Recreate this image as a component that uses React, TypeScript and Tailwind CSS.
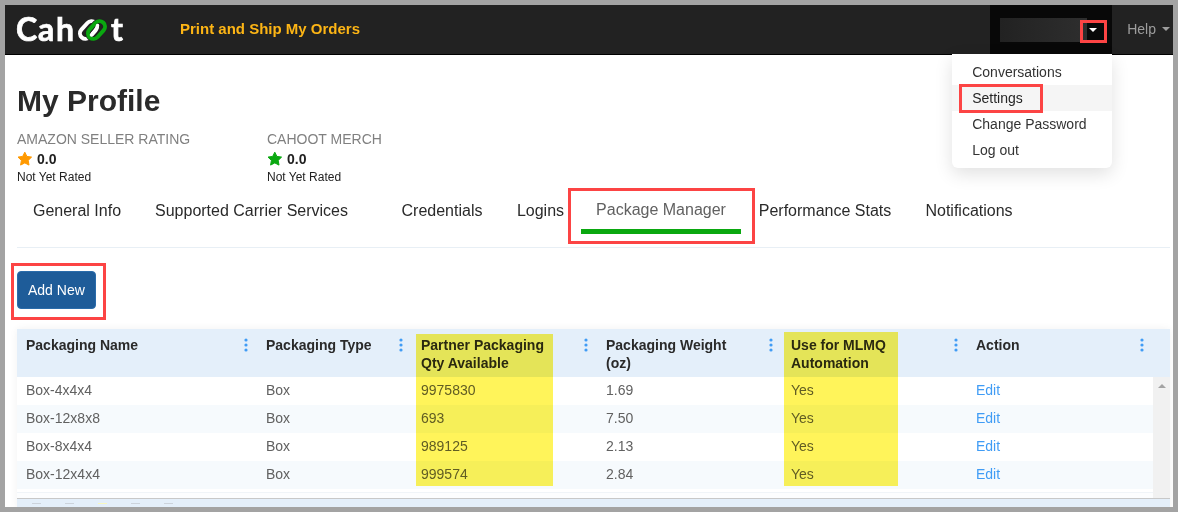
import { useState } from "react";

const MENU = ["Conversations", "Settings", "Change Password", "Log out"];

const RATINGS = [
  { title: "AMAZON SELLER RATING", score: "0.0", note: "Not Yet Rated", color: "text-[#ff9900]" },
  { title: "CAHOOT MERCH", score: "0.0", note: "Not Yet Rated", color: "text-[#0aa810]" },
];

const TABS = [
  { label: "General Info", width: "w-[120px]" },
  { label: "Supported Carrier Services", width: "w-[229px]" },
  { label: "Credentials", width: "ml-[18px] w-[116px]" },
  { label: "Logins", width: "w-[81px]" },
  { label: "Package Manager", width: "w-[160px]" },
  { label: "Performance Stats", width: "w-[168px]" },
  { label: "Notifications", width: "w-[120px]" },
];

const COLUMNS = [
  { title: "Packaging Name", width: "w-[240px]", dots: "right-[9px]" },
  { title: "Packaging Type", width: "w-[155px]", dots: "right-[9px]" },
  { title: "Partner Packaging Qty Available", width: "w-[185px]", dots: "right-[9px]" },
  { title: "Packaging Weight (oz)", width: "w-[185px]", dots: "right-[9px]" },
  { title: "Use for MLMQ Automation", width: "w-[185px]", dots: "right-[9px]" },
  { title: "Action", width: "", dots: "right-[26px]" },
];

const ROWS = [
  { name: "Box-4x4x4", type: "Box", qty: "9975830", weight: "1.69", mlmq: "Yes" },
  { name: "Box-12x8x8", type: "Box", qty: "693", weight: "7.50", mlmq: "Yes" },
  { name: "Box-8x4x4", type: "Box", qty: "989125", weight: "2.13", mlmq: "Yes" },
  { name: "Box-12x4x4", type: "Box", qty: "999574", weight: "2.84", mlmq: "Yes" },
];

function Logo() {
  return (
    <a href="#" aria-label="Cahoot" className="block">
      <svg width="116" height="48" viewBox="-4 -12 116 48" className="block">
        <g
          fill="#fff"
          stroke="#fff"
          strokeWidth="0.7"
          fontSize="32"
          fontWeight="700"
          fontFamily="Lato, sans-serif"
        >
          <text x="-1" y="24">C</text>
          <text x="21" y="24">a</text>
          <text x="39" y="24">h</text>
          <text x="94" y="24">t</text>
        </g>
        <g fill="none" strokeWidth="4">
          <rect x="66" y="3" width="11" height="20" rx="5.5" stroke="#fff" transform="rotate(42 71.5 13)" />
          <rect x="74" y="3" width="11" height="20" rx="5.5" stroke="#222" strokeWidth="5.5" transform="rotate(42 79.5 13)" />
          <rect x="74" y="3" width="11" height="20" rx="5.5" stroke="#0aa810" transform="rotate(42 79.5 13)" />
          <path d="M80.500 8.500C80.500 11 79 13 74.500 18" stroke="#fff" strokeWidth="3.5" strokeLinecap="round" />
        </g>
      </svg>
    </a>
  );
}

function Caret({ className = "" }: { className?: string }) {
  return (
    <svg width="8" height="4" viewBox="0 0 8 4" fill="currentColor" className={className}>
      <path d="M0 0h8L4 4z" />
    </svg>
  );
}

function Star({ className = "" }: { className?: string }) {
  return (
    <svg
      width="16"
      height="16"
      viewBox="0 0 16 16"
      fill="currentColor"
      stroke="currentColor"
      strokeLinejoin="round"
      className={className}
    >
      <path d="M7.8 1.2l2.1 4.2 4.700.7-3.400 3.300.8 4.700-4.200-2.200-4.200 2.200.8-4.700L1 6.100l4.700-.7z" />
    </svg>
  );
}

function Dots() {
  return (
    <svg width="4" height="14" viewBox="0 0 4 14" fill="#409cf5">
      <circle cx="2" cy="2" r="1.6" />
      <circle cx="2" cy="7" r="1.6" />
      <circle cx="2" cy="12" r="1.6" />
    </svg>
  );
}

// red outline drawn over whatever its relative parent holds
function Callout({ className }: { className: string }) {
  return <div className={`pointer-events-none absolute z-20 border-3 border-[#fc4444] ${className}`} />;
}

function TopBar() {
  const [open, setOpen] = useState(true);

  return (
    <header className="flex h-[50px] items-stretch border-b border-black bg-[#222222]">
      <div className="w-[175px] pl-2">
        <Logo />
      </div>
      <a href="#" className="self-center text-[15px] font-bold text-[#fdb515]">
        Print and Ship My Orders
      </a>
      <div className="relative ml-auto w-[122px] bg-[#080808]">
        <button
          type="button"
          aria-label="Account"
          onClick={() => setOpen(!open)}
          className="flex h-full w-full items-center pl-[10px] text-white"
        >
          <span className="h-6 w-[87px] bg-gradient-to-r from-[#222222] to-[#2e2e2e]" />
          <Caret className="ml-[2px]" />
        </button>
        <Callout className="top-[15px] right-[5px] h-[23px] w-[27px]" />
        {open && (
          <ul className="absolute top-[49px] right-0 z-10 w-40 rounded-b-md bg-white py-[5px] text-sm text-[#333333] shadow-[0_6px_18px_rgba(0,0,0,0.12)]">
            {MENU.map((item) => (
              <li key={item} className="relative">
                <a
                  href="#"
                  className={`block pl-5 leading-[26px] ${item === "Settings" ? "bg-[#f5f5f5] text-[#262626]" : ""}`}
                >
                  {item}
                </a>
                {item === "Settings" && <Callout className="-top-px left-[7px] h-[29px] w-[84px]" />}
              </li>
            ))}
          </ul>
        )}
      </div>
      <button type="button" className="flex items-center gap-[6px] pr-[3px] pb-px pl-[15px] text-sm text-[#9d9d9d]">
        Help
        <Caret />
      </button>
    </header>
  );
}

function PackageTable() {
  return (
    <div className="relative overflow-hidden shadow-[0_0_8px_rgba(0,0,0,0.06)]">
      <table className="w-full table-fixed border-collapse text-left text-sm">
        <thead>
          <tr className="h-12 bg-[#e4effa] align-top text-[#2a2a2a]">
            {COLUMNS.map((col) => (
              <th key={col.title} className={`relative pt-[7px] pr-9 pl-[9px] leading-[18px] font-bold ${col.width}`}>
                {col.title}
                <button type="button" aria-label={`${col.title} menu`} className={`absolute top-[9px] ${col.dots}`}>
                  <Dots />
                </button>
              </th>
            ))}
          </tr>
        </thead>
        <tbody className="text-[#616161]">
          {ROWS.map((row) => (
            <tr key={row.name} className="h-7 bg-white even:bg-[#f6fafd]">
              <td className="pb-[2px] pl-[9px]">{row.name}</td>
              <td className="pb-[2px] pl-[9px]">{row.type}</td>
              <td className="pb-[2px] pl-[9px]">{row.qty}</td>
              <td className="pb-[2px] pl-[9px]">{row.weight}</td>
              <td className="pb-[2px] pl-[9px]">{row.mlmq}</td>
              <td className="pb-[2px] pl-[9px]">
                <a href="#" className="text-[#409cf5]">
                  Edit
                </a>
              </td>
            </tr>
          ))}
        </tbody>
      </table>
      <div className="mt-[3px] h-[6px] border-t border-[#f0f4f8] bg-[#fcfdfe]" />
      <div className="box-content flex h-2 gap-6 border-t border-[#c8c8c8] bg-[#e4effa] pt-1 pl-[15px]">
        <span className="h-px w-[9px] bg-[#ccd3dc]" />
        <span className="h-px w-[9px] bg-[#ccd3dc]" />
        <span className="h-px w-[9px] bg-[#f8f8c0]" />
        <span className="h-px w-[9px] bg-[#ccd3dc]" />
        <span className="h-px w-[9px] bg-[#ccd3dc]" />
      </div>

      <div className="absolute top-12 right-0 flex h-[121px] w-[17px] justify-center bg-[#f1f1f1] pt-[7px] text-[#a3a3a3]">
        <Caret className="rotate-180" />
      </div>

      {/* highlighter over the two columns */}
      <div className="pointer-events-none absolute top-[5px] left-[399px] h-[152px] w-[137px] bg-[#fff45a] mix-blend-multiply" />
      <div className="pointer-events-none absolute top-[3px] left-[767px] h-[154px] w-[114px] bg-[#fff45a] mix-blend-multiply" />
    </div>
  );
}

export default function App() {
  const [tab, setTab] = useState("Package Manager");

  return (
    <div className="h-screen overflow-hidden border-5 border-[#a3a3a3] bg-white font-['Liberation_Sans',Arial,sans-serif]">
      <TopBar />
      <main className="pr-[3px] pl-3">
        <h1 className="pt-7 text-[30px] leading-9 font-bold text-[#2a2a2a]">My Profile</h1>

        <section className="mt-[10px] flex">
          {RATINGS.map((r) => (
            <div key={r.title} className="w-[250px] text-[#212121]">
              <div className="text-sm leading-5 text-[#808080]">{r.title}</div>
              <div className="flex items-center gap-1 text-sm leading-5 font-bold">
                <Star className={r.color} />
                {r.score}
              </div>
              <div className="text-xs leading-4">{r.note}</div>
            </div>
          ))}
        </section>

        <nav className="flex h-[63px] border-b border-[#e8eff5]">
          {TABS.map((t) => (
            <div key={t.label} className={`relative shrink-0 ${t.width}`}>
              <button
                type="button"
                onClick={() => setTab(t.label)}
                className={`h-[49px] w-full text-base whitespace-nowrap ${
                  tab === t.label ? "border-b-5 border-[#0aa810] pt-[6px] text-[#616161]" : "pt-[2px] text-[#2a2a2a]"
                }`}
              >
                {t.label}
              </button>
              {t.label === "Package Manager" && <Callout className="top-[3px] -right-[14px] -left-[13px] h-14" />}
            </div>
          ))}
        </nav>

        <div className="relative mt-[23px] mb-5 w-fit">
          <button
            type="button"
            className="block h-[38px] rounded border border-[#2a6cab] bg-[#1e5c99] px-[10px] text-sm text-white"
          >
            Add New
          </button>
          <Callout className="-top-2 -right-[10px] -bottom-[11px] -left-[6px]" />
        </div>

        <PackageTable />
      </main>
    </div>
  );
}
